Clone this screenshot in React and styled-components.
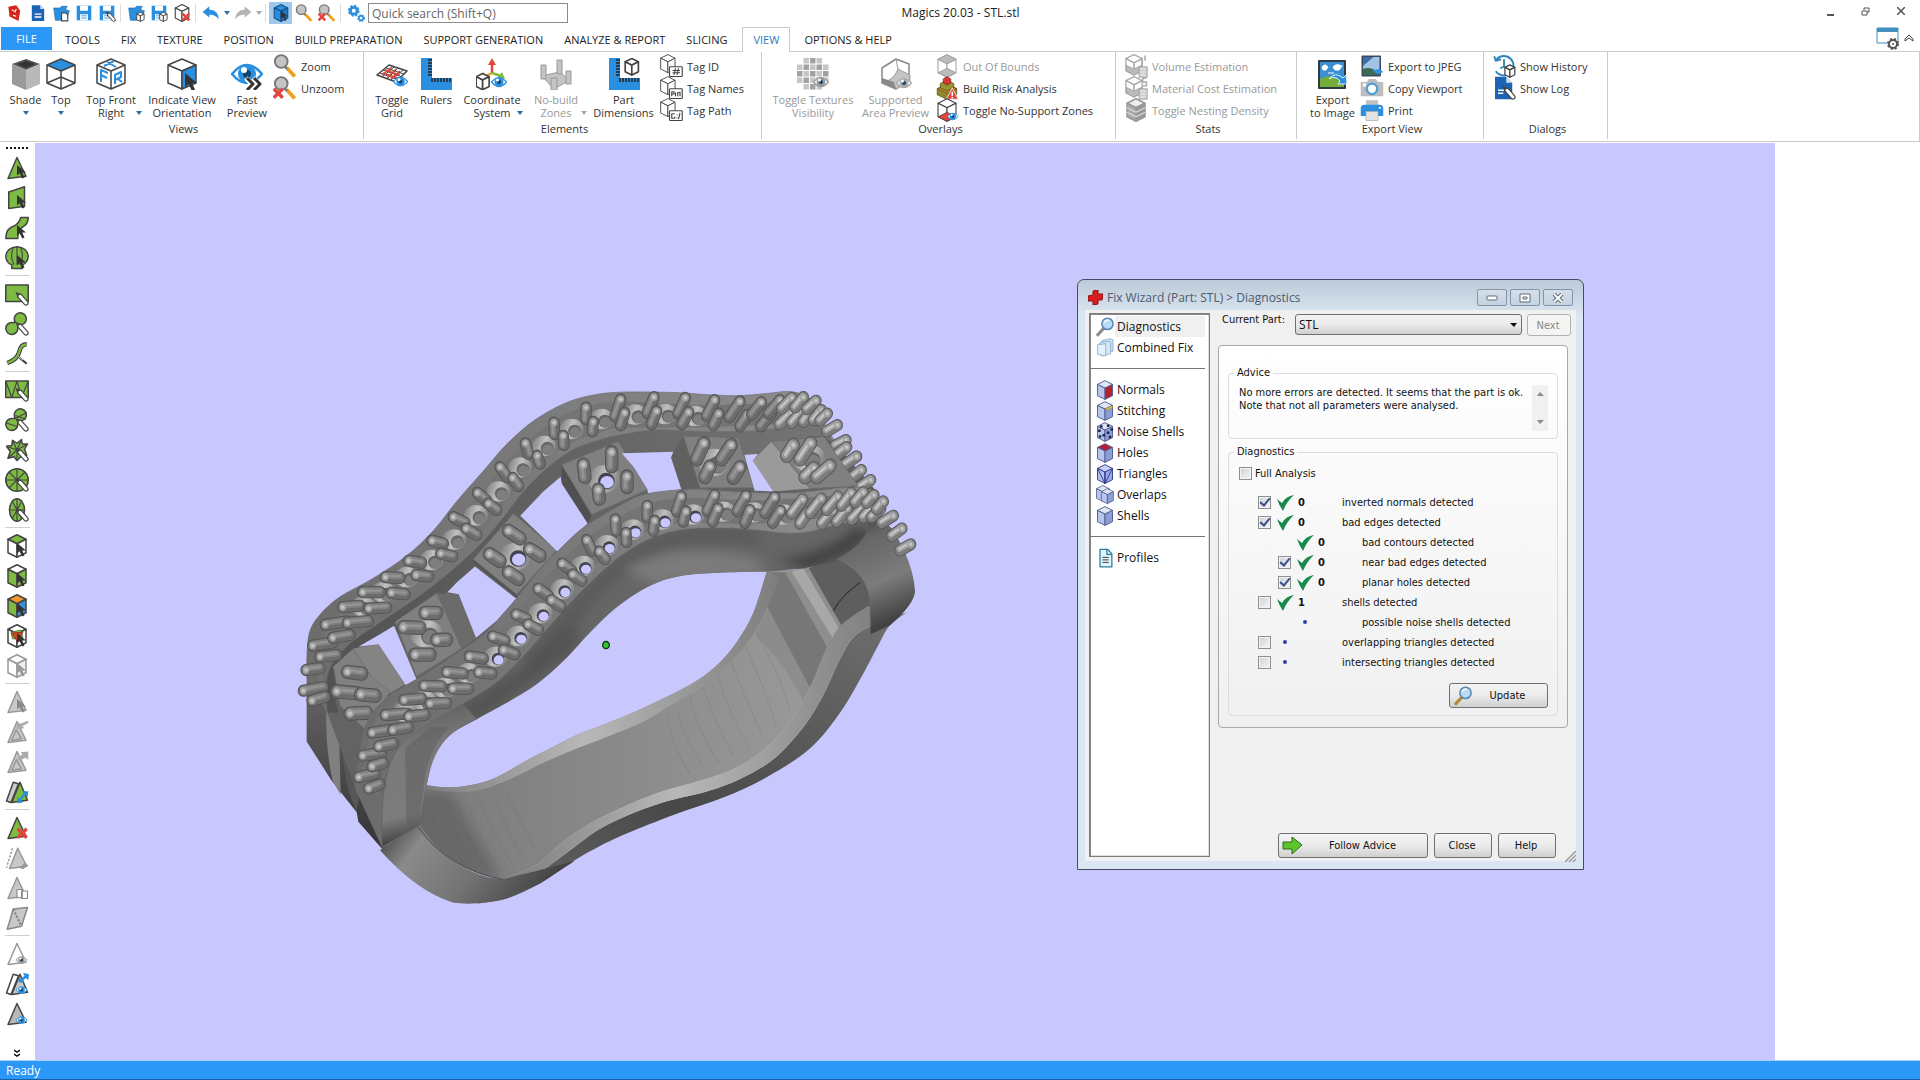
import React from "react";
import styled, { createGlobalStyle, css } from "styled-components";

const GlobalStyle = createGlobalStyle`
  * {
    box-sizing: border-box;
  }
  body {
    margin: 0;
    background: #fff;
    color: #333;
    font-family: "Open Sans", "Noto Sans", sans-serif;
    font-size: 11px;
  }
  button, input, select {
    font: inherit;
    color: inherit;
  }
  button {
    padding: 0;
    border: 0;
    background: none;
  }
  svg {
    display: block;
    flex: none;
  }
`;

const BLUE = "#2b8fe0";
const DARK = "#444";
const GREEN = "#7dbb42";

/* ---------- icon parts, all on a 32 grid ---------- */

const Icon = ({ size = 24, box = 32, children }) => (
  <svg
    width={size}
    height={size}
    viewBox={`0 0 ${box} ${box}`}
    fill="none"
    strokeLinejoin="round"
    aria-hidden="true"
  >
    {children}
  </svg>
);

const Cube = ({ top = "#fff", left = "#fff", right = "#fff", line = DARK, at = "", w = 2 }) => (
  <g stroke={line} strokeWidth={w} transform={at || undefined}>
    <path d="M16 1 28 7 16 13 4 7Z" fill={top} />
    <path d="M4 7 16 13V31L4 25Z" fill={left} />
    <path d="M28 7 16 13V31L28 25Z" fill={right} />
  </g>
);

const Cursor = ({ fill = "#333", at = "translate(16 12)" }) => (
  <path transform={at} d="M0 0V14L3.500 11 7 18 10 16.500 7 10H12Z" fill={fill} />
);

const Pencil = ({ line = DARK }) => (
  <g strokeLinecap="round">
    <path d="M20 19 28 28" stroke={line} strokeWidth="7" />
    <path d="M14 13 23 17 17 22Z" fill={line} />
    <path d="M20 19 28 28" stroke="#fff" strokeWidth="4" />
  </g>
);

const Eye = ({ at = "", fill = BLUE }) => (
  <g transform={at || undefined}>
    <path d="M1 16Q16 -2 31 16 16 34 1 16Z" fill="#fff" stroke={fill} strokeWidth="2.500" />
    <circle cx="16" cy="16" r="9" fill={fill} />
    <circle cx="16" cy="16" r="4" fill="#12466f" />
    <circle cx="13" cy="12" r="3" fill="#fff" />
  </g>
);

const Cross = ({ at = "translate(15 15)", fill = "#e2453c" }) => (
  <path transform={at} d="M2 2 14 14M14 2 2 14" stroke={fill} strokeWidth="4.500" />
);

const Lens = () => (
  <>
    <path d="M18 18 29 30" stroke="#f0a020" strokeWidth="5" />
    <path d="M15 16 19 20" stroke="#777" strokeWidth="3" />
    <circle cx="11" cy="10" r="8.500" fill="#c4c4c4" stroke="#777" strokeWidth="2.500" />
  </>
);

const Caret = ({ fill = "#2c6ca5" }) => (
  <svg width="6" height="4" viewBox="0 0 6 4" aria-hidden="true">
    <path d="M0 0H6L3 4Z" fill={fill} />
  </svg>
);

const Folder = () => (
  <path d="M3 7H14L17 4H27L24 10 31 12 25 29H6Z" fill={BLUE} stroke="#1c5f9d" />
);

const Disk = () => (
  <>
    <path d="M3 3H29V29H3Z" fill={BLUE} />
    <path d="M9 3H23V12H9ZM9 18H23V29H9Z" fill="#fff" />
    <path d="M11 21H21M11 25H21" stroke={BLUE} strokeWidth="1.500" />
  </>
);

const SmallCube = ({ line = DARK }) => <Cube at="translate(15 14) scale(0.55)" w={3} line={line} />;

/* ---------- title bar ---------- */

const Page = styled.div`
  display: flex;
  flex-direction: column;
  min-height: 100vh;
`;

const TitleBar = styled.header`
  display: grid;
  grid-template-columns: 1fr auto 1fr;
  align-items: start;
  height: 27px;
  padding-left: 1px;
`;

const QuickTools = styled.div`
  display: flex;
  align-items: center;
  height: 26px;
`;

const QuickButton = styled.button`
  display: flex;
  align-items: center;
  justify-content: center;
  width: ${({ $wide }) => ($wide ? 25 : 23)}px;
  height: 22px;
  background: ${({ $on }) => ($on ? "#9fc9ec" : "none")};
`;

const CaretButton = styled.button`
  display: flex;
  align-items: center;
  justify-content: center;
  width: 9px;
  height: 22px;
`;

const QuickDivider = styled.span`
  width: 1px;
  height: 18px;
  margin: 0 3px 0 2px;
  background: #dcdcdc;
`;

const SearchBox = styled.input`
  width: 200px;
  height: 20px;
  margin-left: 1px;
  padding: 0 3px;
  border: 1px solid #8c8c8c;
  outline: 0;
  background: #fff;
  font-size: 12px;
  &::placeholder {
    color: #666;
    opacity: 1;
  }
`;

const AppTitle = styled.h1`
  margin: 0;
  color: #222;
  font-size: 12px;
  font-weight: 400;
  line-height: 25px;
`;

const WindowButtons = styled.div`
  display: flex;
  justify-content: flex-end;
  padding-right: 2px;
`;

const WindowButton = styled.button`
  display: flex;
  align-items: center;
  justify-content: center;
  width: 35px;
  height: 22px;
`;

/* ---------- tabs ---------- */

const TabBar = styled.nav`
  display: flex;
  height: 25px;
  padding-left: 1px;
  border-bottom: 1px solid #c9cbcd;
`;

const Tab = styled.a`
  height: 25px;
  padding: 0 11px 0 10px;
  color: #222;
  line-height: 26px;
  text-decoration: none;
  white-space: nowrap;
  ${({ $kind }) =>
    $kind === "file" &&
    css`
      width: 51px;
      height: 23px;
      margin-right: 3px;
      padding: 0;
      background: #2b98f7;
      color: #fff;
      line-height: 24px;
      text-align: center;
    `}
  ${({ $kind }) =>
    $kind === "current" &&
    css`
      margin: 0 4px;
      padding: 0 10px;
      border: 1px solid #c9cbcd;
      border-bottom: 0;
      background: #fff;
      color: #2a78b8;
      line-height: 24px;
    `}
`;

const TabTools = styled.div`
  display: flex;
  align-items: center;
  gap: 4px;
  margin-left: auto;
  padding: 0 6px 2px 0;
`;

const TABS = [
  "FILE",
  "TOOLS",
  "FIX",
  "TEXTURE",
  "POSITION",
  "BUILD PREPARATION",
  "SUPPORT GENERATION",
  "ANALYZE & REPORT",
  "SLICING",
  "VIEW",
  "OPTIONS & HELP",
];

const tabKind = name => ({ FILE: "file", VIEW: "current" })[name];

/* ---------- ribbon ---------- */

const Ribbon = styled.div`
  display: flex;
  height: 90px;
  border-right: 1px solid #c9cbcd;
  border-bottom: 1px solid #c9cbcd;
`;

const Group = styled.section`
  display: flex;
  flex-direction: column;
  width: ${({ $width }) => $width}px;
  height: 87px;
  border-right: 1px solid #c9cbcd;
`;

const GroupBody = styled.div`
  display: flex;
  flex: 1;
  padding-left: 8px;
`;

const GroupLabel = styled.h2`
  margin: 0;
  padding: 0 0 2px 4px;
  font-size: 11px;
  font-weight: 400;
  line-height: 16px;
  text-align: center;
`;

const BigButton = styled.button`
  display: flex;
  flex-direction: column;
  align-items: center;
  width: ${({ $width }) => $width}px;
  padding-top: 6px;
  line-height: 13px;
  white-space: nowrap;
  &:disabled {
    color: #999;
  }
`;

const BigText = styled.span`
  margin-top: 3px;
`;

const SecondLine = styled.span`
  display: grid;
  grid-template-columns: 1fr auto 1fr;
  align-items: center;
  width: 100%;
  height: 13px;
  padding: 0 1px;
  svg {
    grid-column: ${({ $alone }) => ($alone ? 2 : 3)};
    justify-self: end;
  }
  span {
    grid-column: 2;
  }
`;

const SmallColumn = styled.div`
  display: flex;
  flex-direction: column;
  align-items: flex-start;
  padding-top: 3px;
`;

const SmallButton = styled.button`
  display: flex;
  align-items: center;
  gap: 4px;
  height: 22px;
  white-space: nowrap;
  &:disabled {
    color: #999;
  }
`;

const Big = ({ width, icon, first, second, menu, disabled }) => (
  <BigButton $width={width} disabled={disabled}>
    <Icon size={32}>{icon}</Icon>
    <BigText>{first}</BigText>
    <SecondLine $alone={!second}>
      {second && <span>{second}</span>}
      {menu && <Caret fill={disabled ? "#aaa" : undefined} />}
    </SecondLine>
  </BigButton>
);

const Small = ({ icon, children, disabled }) => (
  <SmallButton disabled={disabled}>
    <Icon>{icon}</Icon>
    {children}
  </SmallButton>
);

const RulerShape = () => (
  <>
    <path d="M1 0H12V20H32V32H1Z" fill={BLUE} />
    <path
      d="M8 2H12M8 5H12M8 8H12M8 11H12M8 14H12M8 17H12M12 20V24M15 20V24M18 20V24M21 20V24M24 20V24M27 20V24M30 20V24"
      stroke="#222"
      strokeWidth="1.500"
    />
  </>
);

const GridShape = () => (
  <>
    <path d="M13 7 31 13 20 24 1 17Z" fill="#fff" stroke={DARK} strokeWidth="1.500" />
    <path d="M18 9 6 19M22 10 11 21M27 12 15 22M10 10 28 16M7 12 26 19M4 15 23 22" stroke={DARK} />
    <path d="M16 9 6 17M20 11 11 20M24 13 15 21M9 12 24 17M7 15 22 20" stroke="#e2453c" strokeWidth="1.500" />
    <Eye at="translate(17 16) scale(0.47)" />
  </>
);

const AxesShape = () => (
  <>
    <path d="M16 15V4" stroke="#e2453c" strokeWidth="2.500" />
    <path d="M16 0 20 7H12Z" fill="#e2453c" />
    <path d="M16 15 8 19" stroke="#f0a020" strokeWidth="2.500" />
    <path d="M4 21 7 14 11 20Z" fill="#f0a020" />
    <path d="M16 15 25 18" stroke={GREEN} strokeWidth="2.500" />
    <path d="M29 21 21 20 26 14Z" fill={GREEN} />
    <Cube at="translate(-2 15) scale(0.54)" w={3} />
    <Eye at="translate(15 16) scale(0.5)" />
  </>
);

const NoBuildShape = () => (
  <g fill="#c4c4c4" stroke="#999">
    <path d="M2 18 19 14 30 22 14 31Z" />
    <path d="M1 7H6V21H1ZM17 2H22V16H17ZM26 13H31V26H26ZM11 20H17V32H11Z" />
  </g>
);

const tagIcon = mark => (
  <>
    <Cube at="translate(-1 0) scale(0.8)" w={1.5} />
    <rect x="14" y="17" width="17" height="13" rx="1" fill="#fff" stroke={DARK} strokeWidth="1.500" />
    <path d={mark} stroke={DARK} strokeWidth="1.500" />
  </>
);

const estimateIcon = mark => (
  <>
    <Cube at="translate(-1 0) scale(0.9)" line="#aaa" />
    <path d="M3 15 13 20 24 15V22L13 28 3 22Z" fill="#bbb" stroke="#999" />
    <path d="M20 17H31V31H20Z" fill="#ccc" stroke="#999" />
    <path d="M22 20H29M22 24H29M22 28H29" stroke="#fff" />
    <path d={mark} stroke="#aaa" strokeWidth="2" />
  </>
);

const TextureShape = () => {
  const dots = [];
  for (let row = 0; row < 5; row += 1) {
    for (let col = 0; col < 5; col += 1) {
      const x = col * 6.5;
      const y = row * 6.5;
      if (Math.hypot(col - 2, row - 2) < 2.5) {
        dots.push(
          <rect
            key={`${row}-${col}`}
            x={x}
            y={y}
            width="5.500"
            height="5.500"
            fill={(row + col) % 2 ? "#c6c6c6" : "#a2a2a2"}
          />
        );
      }
    }
  }
  return (
    <>
      {dots}
      <Eye at="translate(16 16) scale(0.5)" fill="#999" />
    </>
  );
};

const RibbonBar = () => (
  <Ribbon>
    <Group $width={364}>
      <GroupBody>
        <Big
          width={35}
          first="Shade"
          menu
          icon={
            <>
              <path d="M16 1 30 6 16 12 2 6Z" fill="#555" />
              <path d="M2 6 16 12V32L2 26Z" fill="#9a9a9a" />
              <path d="M30 6 16 12V32L30 26Z" fill="#b8b8b8" />
              <path d="M7 6 16 3 25 6 16 10Z" fill="#333" />
            </>
          }
        />
        <Big
          width={36}
          first="Top"
          menu
          icon={
            <>
              <path d="M2 7V25L16 31 30 25V7M16 13V31M2 25 16 19 30 25M16 13V19" stroke={DARK} strokeWidth="1.500" />
              <path d="M16 1 30 7 16 13 2 7Z" fill={BLUE} stroke={DARK} strokeWidth="1.500" />
            </>
          }
        />
        <Big
          width={64}
          first="Top Front"
          second="Right"
          menu
          icon={
            <>
              <path d="M16 1 30 7V25L16 31 2 25V7ZM2 7 16 13 30 7M16 13V31" fill="#fff" stroke={DARK} strokeWidth="1.500" />
              <path d="M6 24V12L13 15M6 17 12 20M20 26V17L26 14V19L20 22M23 21 27 24M12 4 21 9M9 8 19 3" stroke={BLUE} strokeWidth="2" />
            </>
          }
        />
        <Big
          width={78}
          first="Indicate View"
          second="Orientation"
          icon={
            <>
              <path d="M16 1 30 7 16 13 2 7ZM2 7 16 13V31L2 25Z" fill="#fff" stroke={DARK} strokeWidth="1.500" />
              <path d="M30 7 16 13V31L30 25Z" fill={BLUE} stroke={DARK} strokeWidth="1.500" />
              <Cursor at="translate(19 15)" />
            </>
          }
        />
        <Big
          width={52}
          first="Fast"
          second="Preview"
          icon={
            <>
              <Eye />
              <path d="M15 20 21 26 15 32M22 20 28 26 22 32" stroke="#fff" strokeWidth="5" />
              <path d="M16 20 22 26 16 32M23 20 29 26 23 32" stroke="#333" strokeWidth="3" />
            </>
          }
        />
        <SmallColumn>
          <Small icon={<Lens />}>Zoom</Small>
          <Small
            icon={
              <>
                <Lens />
                <Cross at="translate(-1 15)" />
              </>
            }
          >
            Unzoom
          </Small>
        </SmallColumn>
      </GroupBody>
      <GroupLabel>Views</GroupLabel>
    </Group>

    <Group $width={398}>
      <GroupBody>
        <Big width={40} first="Toggle" second="Grid" icon={<GridShape />} />
        <Big width={48} first="Rulers" icon={<RulerShape />} />
        <Big width={64} first="Coordinate" second="System" menu icon={<AxesShape />} />
        <Big width={64} first="No-build" second="Zones" menu disabled icon={<NoBuildShape />} />
        <Big
          width={71}
          first="Part"
          second="Dimensions"
          icon={
            <>
              <RulerShape />
              <Cube at="translate(15 0) scale(0.55)" w={3} />
            </>
          }
        />
        <SmallColumn>
          <Small icon={tagIcon("M20 28 22 19M24 28 26 19M18 22H28M18 25H28")}>Tag ID</Small>
          <Small icon={tagIcon("M17 27V21H20V24H17M22 27V22M25 27V22H27M28 21V27")}>Tag Names</Small>
          <Small icon={tagIcon("M21 21H17V27H21V25M24 22V23M24 26V27M28 20 26 28")}>Tag Path</Small>
        </SmallColumn>
      </GroupBody>
      <GroupLabel>Elements</GroupLabel>
    </Group>

    <Group $width={354}>
      <GroupBody>
        <Big width={86} first="Toggle Textures" second="Visibility" disabled icon={<TextureShape />} />
        <Big
          width={79}
          first="Supported"
          second="Area Preview"
          disabled
          icon={
            <>
              <path d="M2 10 16 1 29 6V22L16 31 2 25Z" fill="#fff" stroke="#888" strokeWidth="1.500" />
              <path d="M16 1 18 11 30 17V24L16 31 2 25Q14 22 18 11" fill="#c4c4c4" stroke="#999" />
              <path d="M2 20 14 24 16 31 2 25Z" fill="#888" />
              <Eye at="translate(16 17) scale(0.5)" fill="#aaa" />
            </>
          }
        />
        <SmallColumn>
          <Small
            disabled
            icon={
              <>
                <Cube line="#aaa" w={1.5} />
                <path d="M16 1 28 7 16 13 4 7ZM16 19 28 25 16 31 4 25Z" fill="#bbb" stroke="#999" />
              </>
            }
          >
            Out Of Bounds
          </Small>
          <Small
            icon={
              <>
                <path d="M3 17 16 11 29 17V25L16 31 3 25Z" fill="#8f8b2c" stroke="#5b4a1c" />
                <path d="M3 17 16 23 29 17 16 11Z" fill="#d08a34" stroke="#5b4a1c" />
                <path d="M7 10 16 6 25 10V16L16 20 7 16Z" fill="#97952f" stroke="#5b4a1c" />
                <path d="M11 4 16 1 21 4V9L16 12 11 9Z" fill="#d8382f" stroke="#7d211c" />
                <path d="M23 16 31 31H15Z" fill="#e2453c" stroke="#fff" />
                <path d="M23 21V27M23 28V30" stroke="#fff" strokeWidth="2" />
              </>
            }
          >
            Build Risk Analysis
          </Small>
          <Small
            icon={
              <>
                <Cube w={1.5} />
                <path d="M4 25 16 19 28 25 16 31Z" fill="#e2453c" stroke={DARK} />
                <Eye at="translate(16 17) scale(0.48)" />
              </>
            }
          >
            Toggle No-Support Zones
          </Small>
        </SmallColumn>
      </GroupBody>
      <GroupLabel>Overlays</GroupLabel>
    </Group>

    <Group $width={181}>
      <GroupBody>
        <SmallColumn>
          <Small disabled icon={estimateIcon("M24 5V14M28 2V9")}>
            Volume Estimation
          </Small>
          <Small disabled icon={estimateIcon("M30 3H25V8H30V13H24")}>
            Material Cost Estimation
          </Small>
          <Small
            disabled
            icon={
              <>
                <Cube line="#999" top="#eee" left="#aaa" right="#999" />
                <path d="M4 13 16 19 28 13M4 19 16 25 28 19" stroke="#ddd" strokeWidth="1.500" />
              </>
            }
          >
            Toggle Nesting Density
          </Small>
        </SmallColumn>
      </GroupBody>
      <GroupLabel>Stats</GroupLabel>
    </Group>

    <Group $width={187}>
      <GroupBody>
        <Big
          width={55}
          first="Export"
          second="to Image"
          icon={
            <>
              <path d="M2 3H28V30H2Z" fill="#3c8fd2" stroke="#2d3a44" strokeWidth="2" />
              <path d="M3 21Q13 15 27 21V29H3Z" fill="#74ad3c" />
              <path d="M5 9Q8 5 11 9L9 12H6ZM16 9Q19 5 25 8L22 12H18ZM11 15H17" fill="#fff" stroke="#fff" />
              <path d="M12 21Q18 17 23 23L21 26 30 26 29 17 26 20Q18 13 12 21Z" fill="#2b8fe0" stroke="#dff0fb" />
            </>
          }
        />
        <SmallColumn>
          <Small
            icon={
              <>
                <path d="M3 3H27V29H3Z" fill="#9fc4e4" stroke="#3a4a5c" strokeWidth="2" />
                <path d="M4 4H18L4 16Z" fill="#3f6ea8" />
                <path d="M4 20Q14 16 26 25V28H4Z" fill="#3b6b50" />
                <path d="M16 22 24 27 31 24 26 20Z" fill={BLUE} />
              </>
            }
          >
            Export to JPEG
          </Small>
          <Small
            icon={
              <>
                <path d="M1 8H9L12 4H21L24 8H31V27H1Z" fill="#bdbdbd" />
                <circle cx="16" cy="17" r="7" fill="#fff" stroke="#4b9fd8" strokeWidth="3" />
                <path d="M4 10H8V14H4Z" fill="#fff" />
              </>
            }
          >
            Copy Viewport
          </Small>
          <Small
            icon={
              <>
                <path d="M8 3H24V11H8Z" fill="#c0c0c0" />
                <path d="M1 14Q1 9 6 9H26Q31 9 31 14V24H1Z" fill={BLUE} />
                <path d="M8 18H24V30H8Z" fill="#e4e4e4" stroke="#aaa" />
                <path d="M25 13H28" stroke="#fff" strokeWidth="2" />
              </>
            }
          >
            Print
          </Small>
        </SmallColumn>
      </GroupBody>
      <GroupLabel>Export View</GroupLabel>
    </Group>

    <Group $width={124}>
      <GroupBody>
        <SmallColumn>
          <Small
            icon={
              <>
                <path d="M6 7A13 13 0 1 1 5 23M3 3 5 9 12 7" stroke="#2f86b8" strokeWidth="2.500" />
                <path d="M16 7V17L11 19" stroke="#2f86b8" strokeWidth="2.500" />
                <SmallCube />
              </>
            }
          >
            Show History
          </Small>
          <Small
            icon={
              <>
                <path d="M4 1H19L27 9V31H4Z" fill="#1d64b4" />
                <path d="M19 1 27 9H19Z" fill="#cfe2f5" />
                <path d="M8 19H17M8 23H15" stroke="#fff" strokeWidth="2" />
                <Pencil />
              </>
            }
          >
            Show Log
          </Small>
        </SmallColumn>
      </GroupBody>
      <GroupLabel>Dialogs</GroupLabel>
    </Group>
  </Ribbon>
);

/* ---------- marking toolbar ---------- */

const Workspace = styled.div`
  display: flex;
  flex: 1;
  padding: 1px 145px 0 0;
`;

const ToolStrip = styled.aside`
  display: flex;
  flex-direction: column;
  align-items: center;
  width: 35px;
  padding-right: 1px;
`;

const Grip = styled.div`
  width: 22px;
  height: 2px;
  margin: 4px 0;
  background: repeating-linear-gradient(90deg, #111 0 2px, transparent 2px 4px);
`;

const StripButton = styled.button`
  display: flex;
  align-items: center;
  justify-content: center;
  width: 100%;
  height: 30px;
`;

const StripDivider = styled.hr`
  width: 25px;
  height: 1px;
  margin: 2px 0 3px;
  border: 0;
  background: #d0d0d0;
`;

const MoreButton = styled.button`
  display: flex;
  justify-content: center;
  width: 100%;
  margin-top: 20px;
`;

const Tri = ({ fill = GREEN, line = DARK }) => (
  <path d="M16 3 28 28 4 31Z" transform="translate(0 -1)" fill={fill} stroke={line} strokeWidth="2" />
);

const GREY = "#c8c8c8";
const MID = "#999";
const shape = d => <path d={d} fill={GREEN} stroke={DARK} strokeWidth="2" />;
const lines = d => <path d={d} stroke={DARK} strokeWidth="1.500" />;

const STRIP = [
  ["Mark triangle", <><Tri /><Cursor /></>],
  ["Mark plane", <>{shape("M5 8 26 1V27L5 30Z")}<Cursor /></>],
  ["Mark surface", <>{shape("M21 2H31Q31 11 23 15 17 20 17 30H1Q1 16 13 13 19 9 21 2Z")}<Cursor /></>],
  ["Mark shell", <>{shape("M16 1Q30 2 31 14 30 23 23 25V30H9V25Q2 23 1 14 2 2 16 1Z")}{lines("M11 3Q6 14 12 25M16 1V25M21 3Q26 14 20 25")}<Cursor /></>],
  null,
  ["Rectangle", <>{shape("M1 4H31V26H1Z")}<Pencil /></>],
  ["Polyline area", <>{shape("M14 14A8 8 0 1 1 22 17Q18 17 17 21A8 8 0 1 1 9 14Z")}<Pencil /></>],
  ["Curve", <><path d="M29 3Q21 3 19 13T3 28" stroke={DARK} strokeWidth="6" /><path d="M29 3Q21 3 19 13T3 28" stroke={GREEN} strokeWidth="3" /><path d="M17 19 29 29" stroke={DARK} strokeWidth="3" /><path d="M17 19 24 24" stroke="#fff" /></>],
  null,
  ["Mark strip", <>{shape("M1 4H31V26H1Z")}{lines("M1 4 9 26 16 4 22 26 31 4")}<Pencil /></>],
  ["Mark region", <>{shape("M14 14A8 8 0 1 1 22 17Q18 17 17 21A8 8 0 1 1 9 14Z")}{lines("M2 20 17 25M14 14 29 6M14 10 28 15")}<Pencil /></>],
  ["Mark star", <>{shape("M16 7 22 2 23 8 30 8 26 15 29 23 22 24 16 30 12 25 4 27 7 18 2 11 9 10 10 3Z")}{lines("M16 16 22 2M16 16 30 8M16 16 4 27M16 16 2 11M16 16 10 3M16 16V30")}<Pencil /></>],
  ["Mark disc", <><circle cx="16" cy="16" r="15" fill={GREEN} stroke={DARK} strokeWidth="2" />{lines("M16 1V31M1 16H31M5 5 27 27M27 5 5 27")}<Pencil /></>],
  ["Mark ellipse", <><ellipse cx="16" cy="16" rx="10" ry="15" fill={GREEN} stroke={DARK} strokeWidth="2" />{lines("M16 1V31M6 16H26M10 5 22 27M22 5 10 27")}<Pencil /></>],
  null,
  ["Cube top", <><Cube top={GREEN} /><Cursor /></>],
  ["Cube sides", <><Cube left={GREEN} right={GREEN} /><Cursor /></>],
  ["Cube colours", <><Cube top="#f0982a" left={GREEN} right="#3a8fd8" /><Cursor /></>],
  ["Cube inside", <><Cube /><path d="M8 11 21 8 24 18 10 20Z" fill={GREEN} stroke="#47722a" /><path d="M9 12 24 11 16 23Z" fill="#d8432e" stroke="#8b2416" /><Cursor /></>],
  ["Cube hidden", <><Cube line={MID} right="#eee" /><Cursor fill={MID} /></>],
  null,
  ["Unmark", <><Tri fill={GREY} line={MID} /><Cursor fill="#888" /></>],
  ["Shrink selection", <><Tri fill={GREY} line={MID} /><path d="M15 13 22 25 9 27Z" stroke={MID} strokeWidth="2" /><path d="M15 2 16 12 26 11 23 8 31 4V1L20 5Z" fill="#aaa" /></>],
  ["Grow selection", <><Tri fill={GREY} line={MID} /><path d="M15 13 22 25 9 27Z" stroke={MID} strokeWidth="2" /><path d="M31 2 21 3 23 6 16 11 19 15 27 10 31 13Z" fill="#aaa" /></>],
  ["Invert marked", <><path d="M11 3 18 5 8 30 2 28Z" fill="#ccc" stroke={DARK} strokeWidth="2" /><path d="M20 3 30 27 9 30Z" fill={GREEN} stroke={DARK} strokeWidth="2" /><path d="M17 31 16 23 19 25 25 18 23 15 31 15 30 23 27 20 21 27 24 30Z" fill={BLUE} /></>],
  null,
  ["Delete marked", <><Tri /><Cross /></>],
  ["Separate marked", <><path d="M10 3 2 29" stroke={MID} strokeWidth="2" strokeDasharray="3 2" /><path d="M17 3 29 27 6 30Z" fill={GREY} stroke={MID} strokeWidth="2" /><path d="M16 28Q24 28 26 21L31 26 24 31Z" fill={MID} /></>],
  ["Copy marked", <><Tri fill={GREY} line={MID} /><path d="M16 18H23V29H16ZM22 20H30V30H22Z" fill="#fff" stroke="#888" strokeWidth="1.500" /></>],
  ["Join marked", <><path d="M11 4 30 2 22 27 3 31Z" fill={GREY} stroke="#888" strokeWidth="2" /><path d="M11 4 22 27" stroke="#888" strokeWidth="3" strokeDasharray="3 2" /></>],
  null,
  ["Hide marked", <><Tri fill="#fff" line={MID} /><Eye at="translate(14 16) scale(0.5)" fill={MID} /></>],
  ["Invert visible", <><path d="M11 3 18 5 8 30 2 28Z" fill="#fff" stroke={DARK} strokeWidth="2" /><path d="M20 3 30 27 9 30Z" fill={GREY} stroke={DARK} strokeWidth="2" /><Eye at="translate(14 16) scale(0.5)" /><path d="M18 14 19 7 21 9 26 5 24 1 32 3 31 11 28 8 23 12 26 14Z" fill={BLUE} /></>],
  ["Show all", <><Tri fill="#b8b8b8" /><Eye at="translate(14 16) scale(0.5)" /></>],
];

/* ---------- ring model ---------- */

const Viewport = styled.main`
  position: relative;
  flex: 1;
  background: #c8c8ff;
`;

const Model = styled.svg`
  position: absolute;
  top: 227px;
  left: 255px;
`;

const pairs = text => text.trim().split(" ").map(item => item.split(",").map(Number));

// smooth curve through the given points
const curve = (text, start = "M") => {
  const pts = pairs(text);
  return pts.reduce((d, p, i) => {
    if (i === 0) return `${start}${p[0]} ${p[1]}`;
    const a = pts[i - 2] || pts[i - 1];
    const b = pts[i - 1];
    const c = pts[i + 1] || p;
    const x1 = b[0] + (p[0] - a[0]) / 6;
    const y1 = b[1] + (p[1] - a[1]) / 6;
    const x2 = p[0] - (c[0] - b[0]) / 6;
    const y2 = p[1] - (c[1] - b[1]) / 6;
    return `${d}C${x1} ${y1} ${x2} ${y2} ${p[0]} ${p[1]}`;
  }, "");
};

const flip = text => text.trim().split(" ").reverse().join(" ");
const between = (a, b) => `${curve(a)}${curve(flip(b), "L")}Z`;

const BACK_OUTER =
  "50,860 52,780 62,725 95,680 150,635 250,583 350,520 430,450 500,368 580,283 650,208 730,143 820,95 900,72 990,62 1150,63 1250,69 1340,72 1430,66 1490,60 1530,66 1560,80";
const BACK_INNER =
  "112,960 108,880 128,820 180,765 270,706 370,644 460,580 560,498 640,412 700,340 770,275 850,222 930,195 1000,180 1100,168 1250,172 1400,170 1530,154 1590,160 1640,210";
const BACK_WALL =
  "145,960 135,900 150,840 200,785 280,738 390,672 500,600 560,545 640,468 700,398 770,334 830,285 920,262 1000,232 1100,228 1250,230 1400,236 1530,200 1590,185 1640,210";
const FRONT_OUTER =
  "195,1170 205,1090 225,1000 270,935 340,890 420,845 500,795 590,735 680,640 760,550 850,465 900,430 990,380 1070,347 1200,335 1350,342 1500,345 1600,336 1700,328 1760,340";
const FRONT_INNER =
  "276,1335 276,1240 284,1160 305,1090 345,1035 420,985 510,937 610,880 700,800 780,715 860,632 940,560 1010,508 1090,468 1180,446 1300,442 1400,448 1500,457 1580,448 1650,430 1740,420";
const HOLE_TOP =
  "410,1163 425,1105 450,1055 490,1015 560,978 650,932 740,880 820,815 900,735 965,676 1040,625 1110,592 1190,574 1300,567 1430,565";
const HOLE_BOTTOM =
  "410,1163 470,1169 540,1163 620,1140 700,1098 790,1055 870,1018 950,990 1040,955 1130,915 1220,870 1290,818 1345,755 1390,680 1430,565";
const RIM_BOTTOM =
  "400,1172 470,1180 560,1178 660,1146 760,1100 860,1060 960,1024 1060,985 1140,940 1230,892 1300,838 1370,765 1420,690 1470,580";
const LIP_TOP =
  "640,1425 740,1385 820,1320 900,1270 990,1228 1100,1185 1230,1150 1330,1118 1420,1065 1500,985 1560,890 1600,800 1650,718 1735,660";
const LIP_BOTTOM =
  "640,1440 740,1410 830,1352 920,1290 1010,1248 1120,1210 1250,1180 1350,1145 1450,1090 1540,1000 1600,910 1650,810 1700,740 1790,700";
const SIDE_BOTTOM =
  "560,1495 650,1480 750,1438 850,1375 930,1333 1010,1298 1150,1246 1300,1197 1430,1140 1560,1060 1650,960 1720,850 1768,765 1800,715 1850,678";

const PINS = pairs(
  "48,840,90,835 40,898,100,888 66,926,105,915 68,772,130,762 90,803,140,798 106,713,170,704 128,750,180,742 158,664,210,660 172,708,235,703 218,622,270,622 236,668,290,665 286,580,330,582 304,624,345,628 356,534,395,540 378,574,415,578 426,478,460,486 452,514,488,522 490,412,525,428 528,444,560,462 562,344,590,366 595,374,620,392 630,272,652,300 668,302,685,325 706,205,715,235 742,240,750,262 792,147,794,180 820,184,822,210 888,105,888,138 910,145,908,172 992,82,975,130 1004,120,992,155 1092,76,1072,120 1100,115,1085,152 1186,78,1164,122 1196,118,1176,152 1274,84,1250,128 1286,122,1270,155 1350,88,1318,132 1372,126,1350,158 1414,90,1385,125 1444,122,1412,158 1470,84,1435,122 1504,118,1468,152 1506,78,1475,108 1536,114,1505,148 1540,76,1515,105 1566,110,1540,145 1578,86,1550,110 1594,112,1570,140 1612,122,1590,142 1642,154,1610,172 1668,196,1635,212 1670,216,1640,238 1700,242,1660,268 1714,280,1685,302 1742,308,1710,328"
);

const FRONT_PINS = pairs(
  "206,1140,255,1130 236,1172,270,1160 218,1080,275,1072 246,1110,280,1100 246,1016,300,1008 266,1054,310,1045 286,966,345,962 308,1008,355,1000 342,924,395,920 356,970,405,965 402,884,455,886 420,934,470,932 470,846,520,850 488,892,535,892 538,802,580,808 566,846,605,850 608,746,645,758 640,784,675,796 678,684,710,698 714,712,745,728 744,612,775,632 784,644,812,662 816,542,845,562 848,572,875,590 890,476,905,505 928,508,945,530 976,418,979,450 1008,456,1010,482 1072,380,1072,412 1094,422,1090,450 1174,354,1160,395 1188,396,1180,425 1274,350,1252,395 1284,388,1268,425 1368,352,1342,395 1380,392,1365,428 1454,356,1425,400 1472,394,1448,428 1538,362,1505,402 1554,398,1530,430 1594,360,1560,400 1628,394,1595,430 1644,354,1610,392 1672,388,1640,425 1684,344,1655,380 1722,382,1685,418 1720,342,1695,370 1750,382,1720,412 1752,350,1730,372 1772,388,1745,412 1780,368,1760,390 1810,408,1775,428 1836,444,1805,465 1862,488,1830,505"
);

const BACK_SEATS = pairs(
  "225,665 285,625 355,583 430,535 498,478 563,410 630,343 695,276 768,216 850,168 940,140 1040,128 1130,126 1220,132"
);
const FRONT_SEATS = pairs(
  "350,960,0 410,930,0 470,893,0 540,852,0 622,806,1 690,748,1 757,684,1 822,617,1 884,552,1 955,494,1 1033,450,1 1122,422,1 1214,408,1 1305,400,0 1396,402,0 1486,408,0"
);

const BOXES = [
  {
    top: "M130 830 190 780 245 860 300 900 230 1010 150 940Z",
    side: "M190 780 268 768 345 880 300 905 262 910Z",
    tone: "#848484",
    pins: "172,845,215,850 140,900,200,905 212,908,255,912 180,962,230,960",
  },
  {
    top: "M315 705 440 625 515 780 380 858Z",
    side: "M440 625 505 628 558 750 515 780Z",
    tone: "#6b6b6b",
    seat: [415, 742],
    pins: "405,680,440,680 340,720,390,722 440,756,470,755 375,797,420,797",
  },
  {
    top: "M670 402 800 505 680 628 550 530Z",
    side: "M550 530 680 628 680 638 552 542Z",
    tone: "#555",
    seat: [682, 525, 1],
    pins: "655,450,690,472 598,515,630,535 718,502,750,520 655,566,685,585",
  },
  {
    top: "M815 265 985 200 1073 335 905 405Z",
    side: "M815 265 905 405 893 430 815 318Z",
    tone: "#505050",
    seat: [947, 308, 1],
    pins: "880,265,885,300 965,230,965,270 925,335,928,360 1011,298,1011,328",
  },
  {
    top: "M1180 185 1345 190 1392 330 1230 330Z",
    side: "M1180 185 1142 245 1175 332 1230 330Z",
    tone: "#606060",
    seat: [1278, 262],
    pins: "1242,205,1220,250 1324,210,1295,250 1260,270,1245,300 1350,272,1330,302",
  },
  {
    top: "M1445 200 1602 187 1705 325 1560 332Z",
    side: "M1445 200 1387 255 1450 340 1560 332Z",
    tone: "#9a9a9a",
    seat: [1562, 250],
    pins: "1510,210,1490,240 1562,205,1530,250 1572,275,1545,300 1620,268,1580,300",
  },
];

const Pin = ({ at: [x, y, bx, by], r = 17 }) => {
  const len = Math.hypot(bx - x, by - y) || 1;
  const nx = (-(by - y) / len) * r * 0.25;
  const ny = ((bx - x) / len) * r * 0.25;
  const s = bx > x + 8 ? -1 : 1;
  // pins on the right end of the ring face the light
  const lit = x > 1480;
  return (
    <g strokeLinecap="round" fill="none">
      <path d={`M${x} ${y}L${bx} ${by}`} stroke={lit ? "#555" : "#505050"} strokeWidth={r * 2} />
      <path d={`M${x} ${y}L${bx} ${by}`} stroke={lit ? "#7c7c7c" : "#6c6c6c"} strokeWidth={r * 1.75} />
      <path
        d={`M${x + nx * s} ${y + ny * s}L${bx + nx * s} ${by + ny * s}`}
        stroke={lit ? "#9e9e9e" : "#828282"}
        strokeWidth={r}
      />
      <path
        d={`M${x + nx * s} ${y + ny * s}L${bx + nx * s} ${by + ny * s}`}
        stroke={lit ? "#c4c4c4" : "#949494"}
        strokeWidth={r * 0.4}
      />
      <circle cx={x} cy={y} r={r * 0.6} fill="#a2a2a2" />
      <circle cx={x} cy={y} r={r * 0.3} fill="#c6c6c6" />
    </g>
  );
};

const Seat = ({ x, y, open, r = 36 }) => (
  <>
    <ellipse cx={x - 5} cy={y - 3} rx={r} ry={r * 0.8} fill="url(#cone)" />
    {open ? (
      <>
        <ellipse cx={x + 2} cy={y + 3} rx={r * 0.52} ry={r * 0.48} fill="#424252" />
        <ellipse cx={x + 4} cy={y + 6} rx={r * 0.42} ry={r * 0.36} fill="#c8c8ff" />
      </>
    ) : (
      <>
        <ellipse cx={x + 4} cy={y + 3} rx={r * 0.54} ry={r * 0.5} fill="#666" />
        <ellipse cx={x + 6} cy={y + 6} rx={r * 0.46} ry={r * 0.4} fill="#7e7e7e" />
      </>
    )}
  </>
);

const tone = (id, from, to, vertical) => (
  <linearGradient id={id} x1="0" y1="0" x2={vertical ? 0 : 1} y2={vertical ? 1 : 0}>
    <stop offset="0" stopColor={from} />
    <stop offset="1" stopColor={to} />
  </linearGradient>
);

const RingModel = () => (
  <Model width="650" height="560" viewBox="0 0 1950 1568" preserveAspectRatio="none" aria-label="STL part">
    <defs>
      {tone("outerTone", "#6d6d6d", "#333", true)}
      {tone("shankTone", "#7a7a7a", "#9e9e9e")}
      {tone("railTone", "#6c6c6c", "#8e8e8e")}
      {tone("wallTone", "#525252", "#757575")}
      <linearGradient id="cone" x1="0" y1="0.3" x2="1" y2="0.6">
        <stop offset="0" stopColor="#808080" />
        <stop offset="0.500" stopColor="#c2c2c2" />
        <stop offset="1" stopColor="#808080" />
      </linearGradient>
      <linearGradient id="legTone" x1="0" y1="0" x2="0.150" y2="1">
        <stop offset="0" stopColor="#585858" />
        <stop offset="0.350" stopColor="#7a7a7a" />
        <stop offset="0.800" stopColor="#7c7c7c" />
        <stop offset="1" stopColor="#3c3c3c" />
      </linearGradient>
      <linearGradient id="footTone" x1="0" y1="0" x2="1" y2="0.300">
        <stop offset="0" stopColor="#383838" />
        <stop offset="0.250" stopColor="#8a8a8a" />
        <stop offset="0.600" stopColor="#747474" />
        <stop offset="1" stopColor="#444" />
      </linearGradient>
      <linearGradient id="capTone" x1="0" y1="0" x2="0.300" y2="1">
        <stop offset="0" stopColor="#3a3a3a" />
        <stop offset="0.250" stopColor="#666" />
        <stop offset="0.650" stopColor="#7c7c7c" />
        <stop offset="1" stopColor="#424242" />
      </linearGradient>
      <linearGradient id="sideTone" x1="0" y1="1" x2="1" y2="0">
        <stop offset="0" stopColor="#686868" />
        <stop offset="0.400" stopColor="#484848" />
        <stop offset="1" stopColor="#707070" />
      </linearGradient>
      <linearGradient id="rimTone">
        <stop offset="0" stopColor="#7c7c7c" />
        <stop offset="0.450" stopColor="#b8b8b8" />
        <stop offset="1" stopColor="#7d7d7d" />
      </linearGradient>
      <filter id="shade" x="-20%" y="-50%" width="140%" height="200%">
        <feGaussianBlur stdDeviation="16" />
      </filter>
      <clipPath id="face">
        <path d={`${curve(FRONT_INNER)}L1770 430 1740 560 1640 535 1540 556${curve(flip(HOLE_TOP), "L")}L400 1270 276 1340Z`} />
      </clipPath>
      <clipPath id="shank">
        <path d={`${curve(HOLE_BOTTOM)}L1560 540 1740 620 1740 690${curve(flip(LIP_TOP), "L")}C540 1420 440 1350 385 1280L400 1180Z`} />
      </clipPath>
    </defs>

    {/* left outer wall */}
    <path d="M50 830 150 800 330 1000 410 1170 280 1345 205 1265 200 1238 125 1150 50 1040Z" fill="url(#outerTone)" />
    <path d="M112 880Q100 1040 128 1150L152 1190 145 930 130 840Z" fill="#808080" />
    <path d="M150 930 245 1000 200 1235Q150 1150 150 930Z" fill="#565656" />

    {/* inside of the shank */}
    <g clipPath="url(#shank)">
      <path d="M380 560H1750V1430H380Z" fill="url(#shankTone)" />
      <path d="M380 1180 480 1180 640 1430 380 1400Z" fill="#555" opacity="0.500" filter="url(#shade)" />
      <g stroke="#5f5f5f" strokeWidth="3" fill="none" opacity="0.180">
        <path d="M415 1200Q430 1290 480 1350M440 1205Q460 1310 520 1380M470 1210Q500 1320 560 1400M500 1212Q530 1320 590 1405M535 1212Q570 1320 630 1405M570 1205Q610 1310 670 1390M610 1195Q650 1290 700 1370M650 1180Q690 1270 740 1345" />
        <path d="M1130 970Q1150 1060 1200 1130M1160 950Q1190 1050 1240 1110M1200 920Q1230 1030 1290 1100M1240 890Q1280 1000 1330 1080M1280 850Q1320 970 1380 1060M1320 810Q1370 930 1420 1030M1360 760Q1420 880 1460 1000M1400 740Q1460 830 1500 950" />
      </g>
      <path d="M1395 740 1440 660 1620 790 1540 930Q1500 840 1395 740Z" fill="#858585" opacity="0.600" />
      <path d="M1435 566 1490 566 1615 780 1560 890 1430 660 1400 690Z" fill="#777" />
    </g>
    <path d={between(HOLE_BOTTOM, RIM_BOTTOM)} fill="url(#rimTone)" />

    {/* bars seen through the right side */}
    <path d="M1550 556 1640 525 1720 575 1745 640 1735 690 1650 716Z" fill="#5e5e5e" />
    <path d="M1485 565 1555 552 1655 716 1613 780Z" fill="#8e8e8e" />
    <path d="M1505 565 1540 556 1645 720 1628 750Z" fill="#a8a8a8" />
    <path d="M1630 675Q1650 635 1710 595" stroke="#333" strokeWidth="3" fill="none" />

    {/* outer side and lip */}
    <path d={between(LIP_BOTTOM, SIDE_BOTTOM)} fill="url(#sideTone)" />
    <path d={between(LIP_TOP, LIP_BOTTOM)} fill="url(#rimTone)" />

    {/* foot */}
    <path
      d="M270 1345 385 1270C440 1350 540 1425 640 1425L730 1405 855 1374 750 1438 650 1480Q560 1500 490 1492 380 1460 270 1345Z"
      fill="url(#footTone)"
    />
    <path d="M385 1280Q470 1395 640 1427" stroke="#555" strokeWidth="3" fill="none" />

    {/* front face */}
    <g clipPath="url(#face)">
      <path d="M270 400H1780V1350H270Z" fill="#666" />
      <path
        d={between(
          "700,800 780,715 860,632 940,560 1010,508 1090,468 1180,446 1300,442 1400,448",
          "720,850 800,770 880,690 960,610 1030,555 1100,520 1190,495 1300,490 1420,492"
        )}
        fill="#5b5b5b"
        filter="url(#shade)"
      />
      <path d="M1000 560Q1180 470 1400 530L1430 570 1100 600Z" fill="#7c7c7c" filter="url(#shade)" />
      <path d="M480 960 700 830 860 700 860 780 720 880 560 990Z" fill="#484848" opacity="0.600" filter="url(#shade)" />
      <path d="M1460 530Q1600 520 1700 440L1760 460 1660 520 1560 560Z" fill="#303030" opacity="0.700" filter="url(#shade)" />
    </g>
    <path d="M276 1335C276 1200 280 1100 345 1035L420 985 520 935 560 978Q430 1020 410 1163L385 1275Z" fill="url(#legTone)" />
    <path d="M345 1060 420 1000 480 1000Q410 1060 400 1180L385 1275 350 1300Z" fill="#5e5e5e" opacity="0.500" />
    <path d="M1640 530Q1740 480 1735 420 1790 420 1810 450 1870 540 1875 620 1873 655 1800 715L1742 740 1740 660Q1740 570 1640 530Z" fill="url(#capTone)" />

    {/* floor between the rails */}
    <path d={between(BACK_INNER, FRONT_OUTER)} fill="#636363" />

    {/* rails */}
    <path d={between(BACK_INNER, BACK_WALL)} fill="url(#wallTone)" />
    <path d={between(BACK_OUTER, BACK_INNER)} fill="url(#railTone)" stroke="#6a6a6a" strokeWidth="2" />
    <path
      d={between(
        "90,900 85,800 110,730 170,668 270,615 370,550 450,478 520,395 600,310 670,235 750,170 830,122 910,98 1000,88 1250,98 1500,90",
        "112,930 100,850 125,795 190,735 270,680 360,622 450,560 545,478 625,395 690,320 760,255 840,205 930,175 1000,162 1250,160 1500,150"
      )}
      fill="#747474"
    />
    {BACK_SEATS.map(([x, y]) => (
      <Seat key={`${x}-${y}`} x={x} y={y} />
    ))}
    {PINS.map(at => (
      <Pin key={at.join()} at={at} />
    ))}

    {BOXES.map(({ top, side, tone: fill, seat, pins }) => (
      <g key={top}>
        <path d={side} fill={fill} />
        <path d={top} fill="#808080" stroke="#6a6a6a" strokeWidth="2" />
        {seat && <Seat x={seat[0]} y={seat[1]} open={seat[2]} r={48} />}
        {pairs(pins).map(at => (
          <Pin key={at.join()} at={at} r={20} />
        ))}
      </g>
    ))}

    {/* openings between the rails */}
    <g fill="#c8c8ff">
      <path d="M812 299 760 340 691 408 802 508 850 465 893 430 815 318Z" />
      <path d="M555 550 500 595 472 622 506 628 558 750 620 702 678 640Z" />
      <path d="M312 716 270 740 205 775 266 768 347 882 379 865Z" />
      <path d="M995 233 1150 229 1143 245 1174 334 1120 340 1074 346 1072 334 1030 270Z" />
      <path d="M1363 237 1405 235 1388 254 1450 340 1394 338Z" />
    </g>

    <path d={between(FRONT_OUTER, FRONT_INNER)} fill="url(#railTone)" stroke="#6a6a6a" strokeWidth="2" />
    <path
      d={between(
        "215,1150 230,1060 250,990 300,940 420,880 520,818 610,755 695,665 775,575 860,495 930,445 1010,400 1090,370 1200,358 1400,365 1650,350",
        "262,1190 270,1120 300,1050 350,1000 430,955 520,905 600,850 690,770 770,690 850,605 930,535 1000,488 1080,450 1180,428 1400,430 1650,410"
      )}
      fill="#747474"
    />
    {FRONT_SEATS.map(([x, y, open]) => (
      <Seat key={`${x}-${y}`} x={x} y={y} open={open} />
    ))}
    {FRONT_PINS.map(at => (
      <Pin key={at.join()} at={at} />
    ))}

    <circle cx="948" cy="770" r="10" fill="#35c435" stroke="#0b3d0b" strokeWidth="4" />
  </Model>
);

/* ---------- fix wizard ---------- */

const Dialog = styled.section`
  position: absolute;
  top: 136px;
  left: 1042px;
  display: flex;
  flex-direction: column;
  width: 507px;
  height: 591px;
  padding: 0 7px 8px;
  border: 1px solid #474c63;
  border-radius: 7px 7px 0 0;
  background: linear-gradient(#bccad9, #dae6f1 36px);
  color: #111;
`;

const DialogBar = styled.header`
  display: flex;
  align-items: center;
  height: 30px;
  padding: 5px 3px 0;
  color: #4c5a6b;
`;

const DialogTitle = styled.h2`
  flex: 1;
  margin: 0 0 0 4px;
  font-size: 12px;
  font-weight: 400;
`;

const DialogButton = styled.button`
  display: flex;
  align-items: center;
  justify-content: center;
  width: 30px;
  height: 17px;
  margin-left: 3px;
  border: 1px solid #8593a8;
  border-radius: 2px;
  background: linear-gradient(#d5dfea, #c5d2e0);
`;

const DialogBody = styled.div`
  display: flex;
  flex: 1;
  background: #f0f0f0;
`;

const PageList = styled.ul`
  width: 121px;
  margin: 3px 8px 4px 4px;
  padding: 2px 4px 0 1px;
  border: 1px solid #7c7c7c;
  box-shadow: inset 1px 1px 0 #888, inset -1px -1px 0 #ddd;
  background: #fff;
  list-style: none;
`;

const PageLink = styled.a`
  display: flex;
  align-items: center;
  height: 21px;
  padding-left: 4px;
  color: #111;
  font-size: 12px;
  text-decoration: none;
  white-space: nowrap;
  span {
    flex: 1;
    padding-left: 2px;
    background: ${({ $on }) => ($on ? "#f0f0f0" : "none")};
    line-height: 21px;
  }
`;

const ListDivider = styled.li`
  height: 21px;
  background: linear-gradient(#777, #777) center / 100% 1px no-repeat;
`;

const Main = styled.div`
  display: flex;
  flex: 1;
  flex-direction: column;
  padding: 4px 5px 0 0;
  font-family: "DejaVu Sans Condensed", "DejaVu Sans", sans-serif;
  font-size: 11px;
`;

const PartRow = styled.div`
  display: flex;
  align-items: flex-start;
  padding-left: 4px;
`;

const PartLabel = styled.label`
  width: 73px;
  line-height: 12px;
`;

const SelectWrap = styled.div`
  position: relative;
  flex: 1;
  margin-right: 5px;
  svg {
    position: absolute;
    top: 9px;
    right: 5px;
    pointer-events: none;
  }
`;

const PartSelect = styled.select`
  width: 100%;
  height: 21px;
  padding: 0 3px;
  border: 1px solid #707070;
  border-radius: 3px;
  appearance: none;
  background: linear-gradient(#f2f2f2, #ebebeb 50%, #cfcfcf);
  font-family: "Open Sans", sans-serif;
  font-size: 12px;
`;

const PushButton = styled.button`
  display: flex;
  align-items: center;
  justify-content: center;
  width: ${({ $width }) => $width}px;
  height: ${({ $height = 25 }) => $height}px;
  padding: 0 5px 0 3px;
  border: 1px solid #707070;
  border-radius: 3px;
  background: linear-gradient(#f4f4f4, #ebebeb 50%, #d0d0d0);
  span {
    flex: 1;
    text-align: center;
  }
  &:disabled {
    border-color: #adb2b5;
    background: #f4f4f4;
    color: #888;
  }
`;

const Panel = styled.div`
  width: 350px;
  margin-top: 9px;
  padding: 20px 9px 5px;
  border: 1px solid #a9a9a9;
  border-radius: 4px;
  background: linear-gradient(#fff, #f0f0f0);
`;

const Box = styled.fieldset`
  min-width: 0;
  margin: 0 0 6px;
  padding: 5px 9px 7px 10px;
  border: 1px solid #d5dfe5;
  border-radius: 4px;
  legend {
    margin-left: -5px;
    padding: 0 3px;
    line-height: 14px;
  }
`;

const AdviceRow = styled.div`
  display: flex;
  justify-content: space-between;
`;

const AdviceText = styled.p`
  margin: 1px 0 0;
  line-height: 13px;
  white-space: nowrap;
`;

const ScrollTrack = styled.div`
  display: flex;
  flex-direction: column;
  align-items: center;
  justify-content: space-between;
  width: 16px;
  height: 46px;
  padding: 7px 0;
  background: #f0f0f0;
`;

const Check = styled.input`
  display: grid;
  place-content: center;
  width: 13px;
  height: 13px;
  margin: 0;
  border: 1px solid #8e8f8f;
  appearance: none;
  background: linear-gradient(135deg, #cdd1d6, #f6f6f6);
  box-shadow: inset 0 0 0 1px #f4f4f4;
  &:checked::before {
    content: "";
    width: 4px;
    height: 8px;
    margin-top: -2px;
    border: solid #3b4f8c;
    border-width: 0 2px 2px 0;
    transform: rotate(40deg);
  }
`;

const CheckLabel = styled.label`
  display: flex;
  align-items: center;
  gap: 3px;
  height: 14px;
  margin-top: 2px;
`;

const Results = styled.div`
  padding: 12px 0 11px 19px;
`;

const ResultRow = styled.label`
  display: grid;
  grid-template-columns: 19px 21px 44px auto;
  align-items: center;
  height: 20px;
  padding-left: ${({ $deep }) => ($deep ? 20 : 0)}px;
  white-space: nowrap;
`;

const UpdateRow = styled.div`
  display: flex;
  justify-content: flex-end;
`;

const Footer = styled.footer`
  display: flex;
  justify-content: flex-end;
  gap: 6px;
  margin-top: auto;
  padding: 0 15px 3px 0;
`;

const Corner = styled.div`
  position: absolute;
  right: 7px;
  bottom: 7px;
`;

const Tick = () => (
  <svg width="17" height="17" viewBox="0 0 17 17" aria-hidden="true">
    <path d="M0 5 5 9Q9 2 17 1 10 7 6 17Q2 11 0 5Z" fill="#178a4b" />
  </svg>
);

const Dot = () => (
  <svg width="17" height="6" viewBox="0 0 17 6" aria-hidden="true">
    <circle cx="8" cy="3" r="2" fill="#2d3fa8" />
  </svg>
);

const BlueLens = ({ handle = "#b58a3c" }) => (
  <>
    <path d="M15 17 3 30" stroke={handle} strokeWidth="5" />
    <circle cx="20" cy="11" r="9" fill="#b7dcf7" stroke="#5b86ad" strokeWidth="2.500" />
    <path d="M14 9Q17 4 22 5" stroke="#fff" strokeWidth="2" />
  </>
);

const partCube = { top: "#dfe6f6", left: "#b9c5ec", right: "#8c9cd6", line: "#4f5c8d", w: 1.5 };

const LIST = [
  ["Diagnostics", <BlueLens handle="#8d9088" />],
  ["Combined Fix", <><path d="M11 4 24 1 29 3V21L16 25 11 22Z" fill="#c8e0f5" stroke="#6f9cc4" /><path d="M7 8 20 5 25 7V25L12 29 7 26Z" fill="#d3e6f7" stroke="#6f9cc4" /><path d="M4 11 17 9V29L4 26Z" fill="#e4f0fa" stroke="#6f9cc4" /></>],
  null,
  ["Normals", <Cube {...partCube} right="#b82030" />],
  ["Stitching", <><Cube {...partCube} /><path d="M16 13 28 7 27 11 19 14Z" fill="#f3d64e" stroke="#a88a1c" /></>],
  ["Noise Shells", <><Cube {...partCube} /><path d="M8 5h4v4h-4zM19 4h4v4h-4zM5 12h4v4h-4zM12 19h4v4h-4zM6 21h4v4h-4zM19 15h4v4h-4zM25 10h4v4h-4zM22 22h4v4h-4z" fill="#1b2450" /></>],
  ["Holes", <Cube {...partCube} top="#b02038" />],
  ["Triangles", <><Cube {...partCube} top="#c9d3f5" left="#b4bff0" right="#9aa8e8" line="#2f3c8c" /><path d="M4 7 16 31 28 7M16 13V31" stroke="#2f3c8c" strokeWidth="1.500" /></>],
  ["Overlaps", <><Cube {...partCube} at="translate(-1 0) scale(0.85)" /><Cube {...partCube} at="translate(7 5) scale(0.8)" /></>],
  ["Shells", <Cube {...partCube} />],
  null,
  ["Profiles", <><path d="M8 2H20L27 9V30H8Z" fill="#dff4fb" stroke="#2b7d9e" strokeWidth="2" /><path d="M19 2V10H27" stroke="#2b7d9e" strokeWidth="2" /><path d="M12 15H22M12 19H22M12 23H22" stroke="#333" strokeWidth="1.500" /></>],
];

const RESULTS = [
  { name: "inverted normals detected", count: 0, box: true, on: true },
  { name: "bad edges detected", count: 0, box: true, on: true },
  { name: "bad contours detected", count: 0, deep: true },
  { name: "near bad edges detected", count: 0, box: true, on: true, deep: true },
  { name: "planar holes detected", count: 0, box: true, on: true, deep: true },
  { name: "shells detected", count: 1, box: true },
  { name: "possible noise shells detected", deep: true },
  { name: "overlapping triangles detected", box: true },
  { name: "intersecting triangles detected", box: true },
];

const FixWizard = () => (
  <Dialog>
    <DialogBar>
      <svg width="15" height="15" viewBox="0 0 15 15" aria-hidden="true">
        <path d="M5 1 10 0 10 4 15 4 14 10 10 10 10 14 5 15 5 11 0 11 0 6 5 5Z" fill="#d81e1e" stroke="#8f1010" />
      </svg>
      <DialogTitle>Fix Wizard (Part: STL) &gt; Diagnostics</DialogTitle>
      <DialogButton aria-label="Minimize">
        <svg width="12" height="6"><rect x="1" y="1" width="10" height="4" rx="1" fill="#fff" stroke="#5a6878" /></svg>
      </DialogButton>
      <DialogButton aria-label="Maximize">
        <svg width="12" height="10"><path d="M1 1H11V9H1ZM4 4H8V6H4Z" fill="#fff" stroke="#5a6878" /></svg>
      </DialogButton>
      <DialogButton aria-label="Close window">
        <svg width="12" height="10">
          <path d="M2 1 10 9M10 1 2 9" stroke="#5a6878" strokeWidth="4" />
          <path d="M2 1 10 9M10 1 2 9" stroke="#fff" strokeWidth="2" />
        </svg>
      </DialogButton>
    </DialogBar>
    <DialogBody>
      <PageList>
        {LIST.map((item, i) =>
          item ? (
            <li key={item[0]}>
              <PageLink href="#" $on={i === 0}>
                <Icon size={20}>{item[1]}</Icon>
                <span>{item[0]}</span>
              </PageLink>
            </li>
          ) : (
            <ListDivider key={i} />
          )
        )}
      </PageList>
      <Main>
        <PartRow>
          <PartLabel htmlFor="part">Current Part:</PartLabel>
          <SelectWrap>
            <PartSelect id="part">
              <option>STL</option>
            </PartSelect>
            <svg width="7" height="4" aria-hidden="true"><path d="M0 0H7L4 4Z" fill="#111" /></svg>
          </SelectWrap>
          <PushButton $width={44} $height={22} disabled>Next</PushButton>
        </PartRow>
        <Panel>
          <Box>
            <legend>Advice</legend>
            <AdviceRow>
              <AdviceText>
                No more errors are detected. It seems that the part is ok.
                <br />
                Note that not all parameters were analysed.
              </AdviceText>
              <ScrollTrack>
                <svg width="7" height="4"><path d="M0 4H7L3 0Z" fill="#8a8a8a" /></svg>
                <svg width="7" height="4"><path d="M0 0H7L3 4Z" fill="#8a8a8a" /></svg>
              </ScrollTrack>
            </AdviceRow>
          </Box>
          <Box>
            <legend>Diagnostics</legend>
            <CheckLabel>
              <Check type="checkbox" />
              Full Analysis
            </CheckLabel>
            <Results>
              {RESULTS.map(({ name, count, box, on, deep }) => (
                <ResultRow key={name} $deep={deep}>
                  {box ? <Check type="checkbox" defaultChecked={on} /> : <i />}
                  {count === undefined ? <Dot /> : <Tick />}
                  <b>{count}</b>
                  {name}
                </ResultRow>
              ))}
            </Results>
            <UpdateRow>
              <PushButton $width={99}>
                <Icon size={20}><BlueLens /></Icon>
                <span>Update</span>
              </PushButton>
            </UpdateRow>
          </Box>
        </Panel>
        <Footer>
          <PushButton $width={150}>
            <svg width="21" height="19" viewBox="0 0 21 19" aria-hidden="true">
              <path d="M1 6H10V1L20 9 10 18V13H1Z" fill="#5ec42e" stroke="#2b6b12" />
            </svg>
            <span>Follow Advice</span>
          </PushButton>
          <PushButton $width={58}>Close</PushButton>
          <PushButton $width={58}>Help</PushButton>
        </Footer>
      </Main>
    </DialogBody>
    <Corner>
      <svg width="11" height="11"><path d="M0 11 11 0M4 11 11 4M8 11 11 8" stroke="#999" strokeWidth="1.500" /></svg>
    </Corner>
  </Dialog>
);

const StatusBar = styled.footer`
  height: 20px;
  padding-left: 6px;
  border-top: 1px solid #a9cdf5;
  background: linear-gradient(#1b5fa8, #1b5fa8) bottom / 100% 1px no-repeat, #2b98f7;
  color: #fff;
  font-size: 12px;
  line-height: 20px;
`;

const App = () => (
  <>
    <GlobalStyle />
    <Page>
      <TitleBar>
        <QuickTools>
          <QuickButton $wide aria-label="Magics">
            <Icon size={18}><path d="M6 5 20 2 27 12 24 30 8 22Z" fill="#d2251d" /><path d="M12 10 18 14 20 9M14 20 20 22" stroke="#fff" strokeWidth="2" /></Icon>
          </QuickButton>
          <QuickButton aria-label="New"><Icon size={18}><path d="M5 2H20L27 9V30H5Z" fill="#1d64b4" /><path d="M20 2V9H27Z" fill="#cfe2f5" /><path d="M10 18H22M10 23H22" stroke="#fff" strokeWidth="2.500" /></Icon></QuickButton>
          <QuickButton aria-label="Open"><Icon size={18}><Folder /><path d="M17 16H25L28 19V30H17Z" fill="#fff" stroke={DARK} strokeWidth="2" /></Icon></QuickButton>
          <QuickButton aria-label="Save"><Icon size={18}><Disk /></Icon></QuickButton>
          <QuickButton aria-label="Save as"><Icon size={18}><Disk /><Pencil /></Icon></QuickButton>
          <QuickDivider />
          <QuickButton aria-label="Import part"><Icon size={18}><Folder /><SmallCube /></Icon></QuickButton>
          <QuickButton aria-label="Save part"><Icon size={18}><Disk /><SmallCube /></Icon></QuickButton>
          <QuickButton aria-label="Remove part"><Icon size={18}><Cube /><Cross /></Icon></QuickButton>
          <QuickDivider />
          <QuickButton aria-label="Undo"><Icon size={18}><path d="M1 14 13 4V10Q29 10 30 27 23 18 13 19V24Z" fill={BLUE} /></Icon></QuickButton>
          <CaretButton aria-label="Undo list"><Caret /></CaretButton>
          <QuickButton aria-label="Redo"><Icon size={18}><path d="M31 14 19 4V10Q3 10 2 27 9 18 19 19V24Z" fill="#b5b5b5" /></Icon></QuickButton>
          <CaretButton aria-label="Redo list"><Caret fill="#aaa" /></CaretButton>
          <QuickDivider />
          <QuickButton $on aria-label="Select part"><Icon size={18}><Cube top={BLUE} left={BLUE} right="#2377c0" line="#174f85" /><Cursor /></Icon></QuickButton>
          <QuickButton aria-label="Zoom"><Icon size={18}><Lens /></Icon></QuickButton>
          <QuickButton aria-label="Unzoom"><Icon size={18}><Lens /><Cross at="translate(-1 15)" /></Icon></QuickButton>
          <QuickDivider />
          <QuickButton aria-label="Settings">
            <Icon size={18}>
              <circle cx="12" cy="12" r="6" stroke={BLUE} strokeWidth="5" />
              <circle cx="12" cy="12" r="9" stroke={BLUE} strokeWidth="3" strokeDasharray="4 3" />
              <circle cx="25" cy="25" r="4" stroke={BLUE} strokeWidth="3" />
              <circle cx="25" cy="25" r="6" stroke={BLUE} strokeWidth="2" strokeDasharray="2.500 2.500" />
            </Icon>
          </QuickButton>
          <SearchBox placeholder="Quick search (Shift+Q)" aria-label="Quick search" />
        </QuickTools>
        <AppTitle>Magics 20.03 - STL.stl</AppTitle>
        <WindowButtons>
          <WindowButton aria-label="Minimize"><svg width="7" height="9"><path d="M0 8H7" stroke="#555" strokeWidth="2" /></svg></WindowButton>
          <WindowButton aria-label="Restore"><svg width="9" height="9"><path d="M3 3V1H8V5H6M1 4H6V8H1Z" fill="none" stroke="#555" /></svg></WindowButton>
          <WindowButton aria-label="Close"><svg width="8" height="8"><path d="M0 0 8 8M8 0 0 8" stroke="#555" strokeWidth="1.500" /></svg></WindowButton>
        </WindowButtons>
      </TitleBar>

      <TabBar>
        {TABS.map(name => (
          <Tab key={name} href="#" $kind={tabKind(name)}>
            {name}
          </Tab>
        ))}
        <TabTools>
          <button aria-label="Customize interface">
            <svg width="24" height="24" viewBox="0 0 24 24" fill="none">
              <path d="M1 2H22V17H1Z" fill="#fff" stroke="#3f8fc0" />
              <path d="M1 2H22V6H1Z" fill="#3f8fc0" />
              <circle cx="17" cy="18" r="4" fill="#fff" stroke="#555" strokeWidth="2" />
              <circle cx="17" cy="18" r="5" stroke="#555" strokeWidth="2" strokeDasharray="2 2" />
              <circle cx="17" cy="18" r="1" fill="#555" />
            </svg>
          </button>
          <button aria-label="Collapse ribbon">
            <svg width="10" height="8"><path d="M1 5 5 1 9 5V7L5 4 1 7Z" fill="none" stroke="#444" /></svg>
          </button>
        </TabTools>
      </TabBar>

      <RibbonBar />

      <Workspace>
        <ToolStrip>
          <Grip />
          {STRIP.map((tool, i) =>
            tool ? (
              <StripButton key={tool[0]} aria-label={tool[0]}>
                <Icon>{tool[1]}</Icon>
              </StripButton>
            ) : (
              <StripDivider key={i} />
            )
          )}
          <MoreButton aria-label="More tools">
            <svg width="6" height="8"><path d="M0 1 3 3 6 1M0 5 3 7 6 5" fill="none" stroke="#111" strokeWidth="1.500" /></svg>
          </MoreButton>
        </ToolStrip>
        <Viewport>
          <RingModel />
          <FixWizard />
        </Viewport>
      </Workspace>

      <StatusBar>Ready</StatusBar>
    </Page>
  </>
);

export default App;
